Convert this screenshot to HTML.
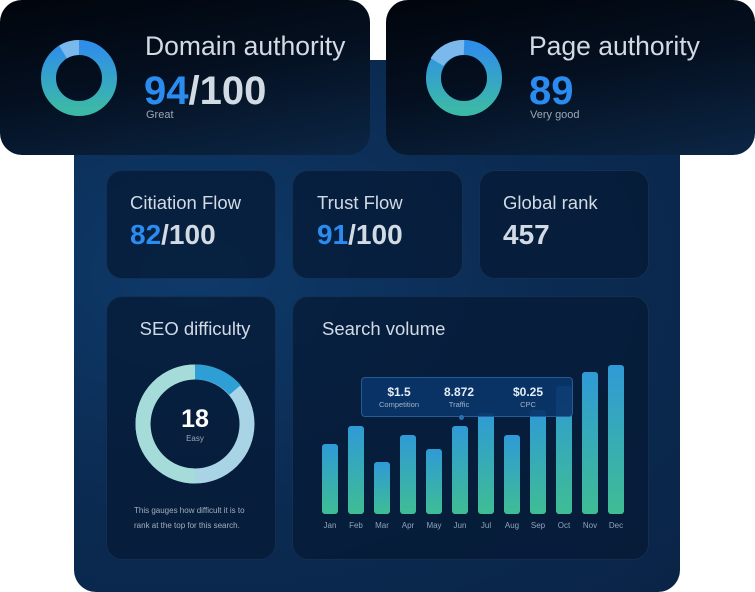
<!DOCTYPE html>
<html><head><meta charset="utf-8"><style>
*{margin:0;padding:0;box-sizing:border-box}
body{width:755px;height:592px;background:#fff;position:relative;overflow:hidden;font-family:"Liberation Sans",sans-serif}
.abs{position:absolute}
.main{left:74px;top:60px;width:606px;height:532px;border-radius:0 0 22px 22px;background:radial-gradient(ellipse at 20% 40%,#0e3a6a 0%,#0b2b52 50%,#0a2447 100%)}
.top{top:0;height:155px;border-radius:22px;background:linear-gradient(170deg,#01050c 0%,#040f1f 45%,#0b2645 100%)}
.card{border-radius:16px;background:rgba(6,26,52,.75);border:1px solid rgba(80,130,190,.18)}
.t{color:#d2dae4}
.blue{color:#2b8cf0}
.bar{position:absolute;width:16px;bottom:78px;border-radius:3px;background:linear-gradient(#2f9ad6,#3fbd94)}
.m{position:absolute;top:521px;width:30px;text-align:center;font-size:8px;color:#8fa4bb}
</style></head><body>
<div class="abs main"></div>
<div class="abs top" style="left:0;width:370px"></div>
<div class="abs top" style="left:386px;width:369px"></div>
<svg class="abs" style="left:0;top:0" width="755" height="160">
<defs><linearGradient id="g1" x1="0" y1="0" x2="0" y2="1"><stop offset="0" stop-color="#2f8fe8"/><stop offset="1" stop-color="#3cb8a8"/></linearGradient></defs>
<circle cx="79" cy="78" r="30.5" fill="none" stroke="url(#g1)" stroke-width="15"/>
<path d="M79 47.5 A30.5 30.5 0 0 0 63 52" fill="none" stroke="#7bb8ec" stroke-width="15"/>
<circle cx="464" cy="78" r="30.5" fill="none" stroke="url(#g1)" stroke-width="15"/>
<path d="M464 47.5 A30.5 30.5 0 0 0 437 62" fill="none" stroke="#7bb8ec" stroke-width="15"/>
</svg>
<div class="abs t" style="left:145px;top:31px;font-size:26.5px">Domain authority</div>
<div class="abs t" style="left:144px;top:69px;font-size:40px;font-weight:bold"><span class="blue">94</span>/100</div>
<div class="abs" style="left:146px;top:109px;font-size:11px;color:#9aa8b8">Great</div>
<div class="abs t" style="left:529px;top:31px;font-size:26.5px">Page authority</div>
<div class="abs blue" style="left:529px;top:69px;font-size:40px;font-weight:bold">89</div>
<div class="abs" style="left:530px;top:109px;font-size:11px;color:#9aa8b8">Very good</div>

<div class="abs card" style="left:106px;top:170px;width:170px;height:109px"></div>
<div class="abs card" style="left:292px;top:170px;width:171px;height:109px"></div>
<div class="abs card" style="left:479px;top:170px;width:170px;height:109px"></div>
<div class="abs t" style="left:130px;top:192px;font-size:18.5px">Citiation Flow</div>
<div class="abs t" style="left:130px;top:219px;font-size:28px;font-weight:bold"><span class="blue">82</span>/100</div>
<div class="abs t" style="left:317px;top:192px;font-size:18.5px">Trust Flow</div>
<div class="abs t" style="left:317px;top:219px;font-size:28px;font-weight:bold"><span class="blue">91</span>/100</div>
<div class="abs t" style="left:503px;top:192px;font-size:18.5px">Global rank</div>
<div class="abs t" style="left:503px;top:219px;font-size:28px;font-weight:bold">457</div>

<div class="abs card" style="left:106px;top:296px;width:170px;height:264px"></div>
<div class="abs card" style="left:292px;top:296px;width:357px;height:264px"></div>
<div class="abs t" style="left:106px;width:178px;text-align:center;top:318px;font-size:18.5px">SEO difficulty</div>
<svg class="abs" style="left:130px;top:360px" width="130" height="130">
<circle cx="65" cy="64" r="52" fill="none" stroke="#a8d4e6" stroke-width="15"/>
<path d="M65 12 A52 52 0 0 0 13 64 A52 52 0 0 0 65 116" fill="none" stroke="#a5dbd8" stroke-width="15"/>
<path d="M65 12 A52 52 0 0 1 105 30" fill="none" stroke="#2e9fd4" stroke-width="15"/>
</svg>
<div class="abs t" style="left:106px;width:178px;text-align:center;top:405px;font-size:25px;font-weight:bold;color:#fff">18</div>
<div class="abs" style="left:106px;width:178px;text-align:center;top:434px;font-size:8px;color:#9aa8b8">Easy</div>
<div class="abs" style="left:134px;top:503px;font-size:8px;line-height:15px;color:#a3b0c0">This gauges how difficult it is to<br>rank at the top for this search.</div>

<div class="abs t" style="left:322px;top:318px;font-size:18.5px">Search volume</div>
<div class="bar" style="left:322px;top:444px"></div>
<div class="bar" style="left:348px;top:426px"></div>
<div class="bar" style="left:374px;top:462px"></div>
<div class="bar" style="left:400px;top:435px"></div>
<div class="bar" style="left:426px;top:449px"></div>
<div class="bar" style="left:452px;top:426px"></div>
<div class="bar" style="left:478px;top:413px"></div>
<div class="bar" style="left:504px;top:435px"></div>
<div class="bar" style="left:530px;top:410px"></div>
<div class="bar" style="left:556px;top:386px"></div>
<div class="bar" style="left:582px;top:372px"></div>
<div class="bar" style="left:608px;top:365px"></div>
<div class="m" style="left:315px">Jan</div><div class="m" style="left:341px">Feb</div><div class="m" style="left:367px">Mar</div><div class="m" style="left:393px">Apr</div><div class="m" style="left:419px">May</div><div class="m" style="left:445px">Jun</div><div class="m" style="left:471px">Jul</div><div class="m" style="left:497px">Aug</div><div class="m" style="left:523px">Sep</div><div class="m" style="left:549px">Oct</div><div class="m" style="left:575px">Nov</div><div class="m" style="left:601px">Dec</div>
<div class="abs" style="left:361px;top:377px;width:212px;height:40px;border-radius:4px;background:rgba(10,52,105,.92);border:1px solid rgba(70,130,200,.5)"></div>
<div class="abs" style="left:459px;top:415px;width:5px;height:5px;border-radius:50%;background:#2f6fb0"></div>
<div class="abs" style="left:368px;width:62px;text-align:center;top:385px;font-size:12px;font-weight:bold;color:#e6edf5">$1.5</div>
<div class="abs" style="left:368px;width:62px;text-align:center;top:400px;font-size:7.5px;color:#9fb2c8">Competition</div>
<div class="abs" style="left:430px;width:58px;text-align:center;top:385px;font-size:12px;font-weight:bold;color:#e6edf5">8.872</div>
<div class="abs" style="left:430px;width:58px;text-align:center;top:400px;font-size:7.5px;color:#9fb2c8">Traffic</div>
<div class="abs" style="left:498px;width:60px;text-align:center;top:385px;font-size:12px;font-weight:bold;color:#e6edf5">$0.25</div>
<div class="abs" style="left:498px;width:60px;text-align:center;top:400px;font-size:7.5px;color:#9fb2c8">CPC</div>
</body></html>
